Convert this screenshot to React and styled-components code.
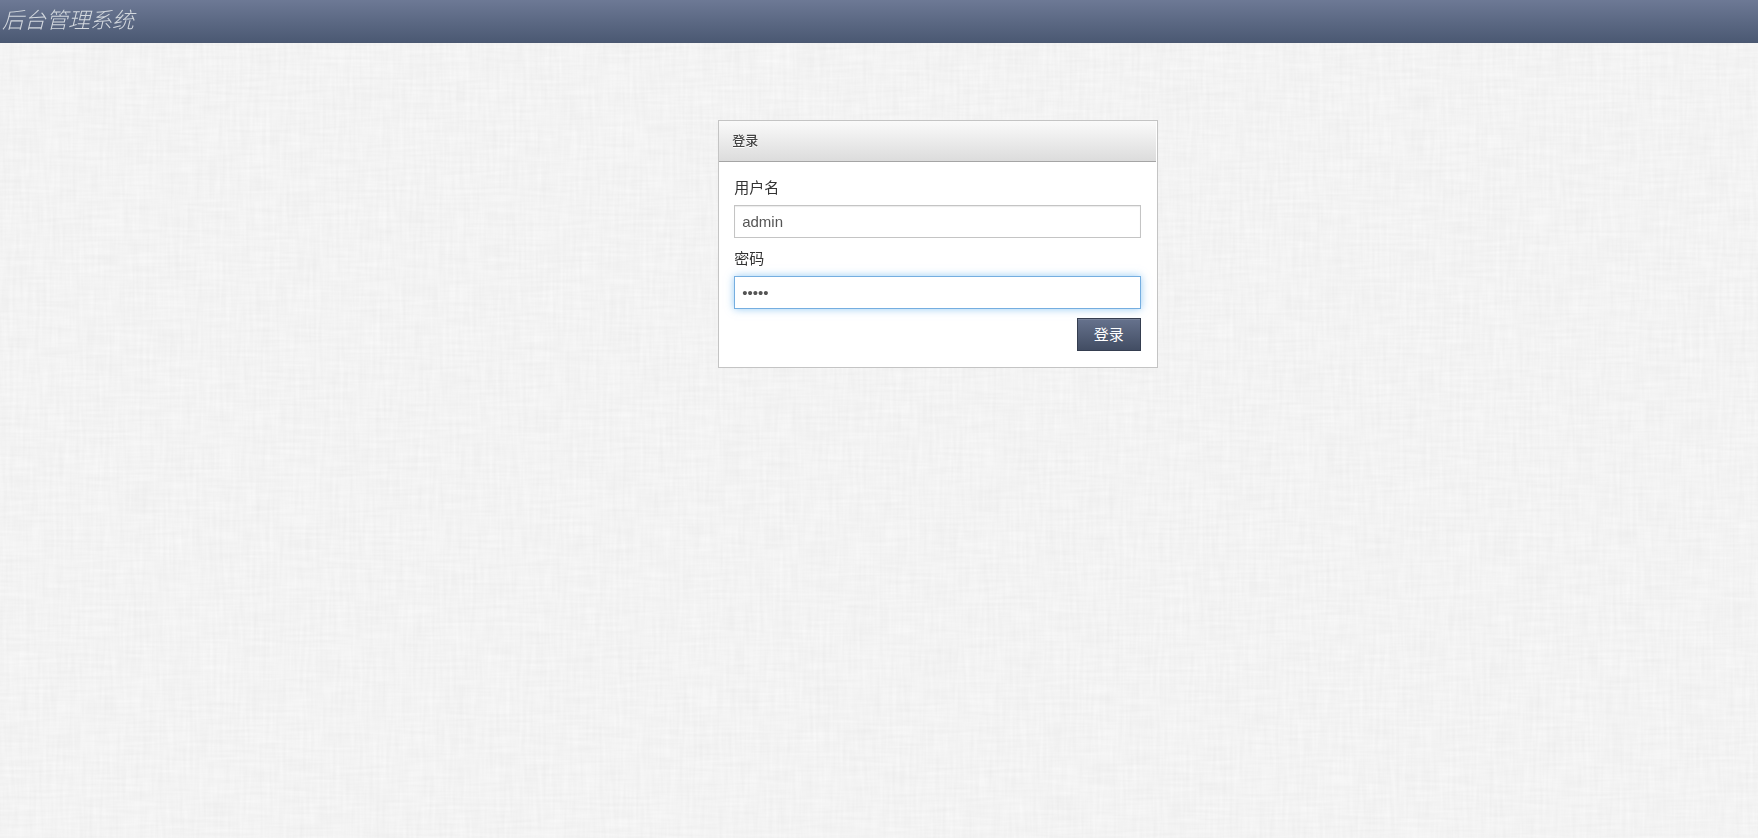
import React, { useState } from 'react';
import styled, { createGlobalStyle } from 'styled-components';

const GlobalStyle = createGlobalStyle`
    * {
        box-sizing: border-box;
    }
    body {
        margin: 0;
        background: #f3f3f3;
        color: #333333;
        font-family: "Liberation Sans", "Noto Sans CJK SC", sans-serif;
        font-size: 15px;
    }
`;

const Texture = styled.svg`
    position: fixed;
    inset: 0;
    z-index: -1;
    width: 100%;
    height: 100%;
`;

const Topbar = styled.header`
    display: flex;
    align-items: center;
    height: 43px;
    padding: 0 2px;
    background: linear-gradient(#6d7995, #4b5973);
    border-bottom: 1px solid #4b5871;
`;

const Brand = styled.h1`
    margin: 0;
    color: #d3d8de;
    font-size: 22px;
    font-style: italic;
    font-weight: 300;
    line-height: 32px;
`;

const Panel = styled.main`
    width: 25%;
    min-width: 280px;
    margin: 77px 0 0 40.85%;
    background: #ffffff;
    border: 1px solid #c4c4c4;
`;

const PanelHeading = styled.h2`
    height: 41px;
    margin: 0 1px 0 0;
    padding: 0 13px;
    background: linear-gradient(#fafafa, #dcdcdc);
    border-bottom: 1px solid #a5a5a5;
    color: #444444;
    font-size: 13px;
    font-weight: 500;
    line-height: 40px;
    text-shadow: 0 1px 0 #ffffff;
`;

const LoginForm = styled.form`
    display: flex;
    flex-direction: column;
    gap: 9px;
    padding: 14px 16px 16px 15px;
`;

const Field = styled.div`
    display: flex;
    flex-direction: column;
    gap: 6px;
`;

const Label = styled.label`
    line-height: 23px;
`;

const TextInput = styled.input`
    width: 100%;
    height: 33px;
    padding: 0 7px;
    background: #ffffff;
    border: 1px solid ${(props) => (props.$active ? '#75aee0' : '#c4c4c4')};
    border-radius: 0;
    box-shadow: ${(props) => (props.$active ? '0 0 8px rgba(82, 168, 236, 0.6)' : 'inset 0 1px 1px rgba(0, 0, 0, 0.08)')};
    color: #555555;
    font-family: inherit;
    font-size: 15px;
    outline: none;
`;

const SubmitButton = styled.button`
    align-self: flex-end;
    height: 33px;
    padding: 0 16px;
    background: linear-gradient(#66728d, #424d63);
    border: 1px solid #353e50;
    box-shadow: inset 0 1px 0 rgba(255, 255, 255, 0.12);
    color: #ffffff;
    font-family: inherit;
    font-size: 15px;
    line-height: 30px;
    cursor: pointer;
`;

// Linen weave: one noise stretched along each axis
const Linen = () => (
    <Texture aria-hidden="true">
        <filter id="weft" x="0" y="0" width="100%" height="100%" colorInterpolationFilters="sRGB">
            <feTurbulence type="fractalNoise" baseFrequency="0.025 0.3" numOctaves="2" seed="4" />
            <feColorMatrix values="0.07 0 0 0 0.917  0.07 0 0 0 0.917  0.07 0 0 0 0.917  0 0 0 0 1" />
        </filter>
        <filter id="warp" x="0" y="0" width="100%" height="100%" colorInterpolationFilters="sRGB">
            <feTurbulence type="fractalNoise" baseFrequency="0.3 0.025" numOctaves="2" seed="9" />
            <feColorMatrix values="0.07 0 0 0 0.917  0.07 0 0 0 0.917  0.07 0 0 0 0.917  0 0 0 0 0.5" />
        </filter>
        <rect width="100%" height="100%" filter="url(#weft)" />
        <rect width="100%" height="100%" filter="url(#warp)" />
    </Texture>
);

const App = () => {
    const [username, setUsername] = useState('admin');
    const [password, setPassword] = useState('admin');
    const [active, setActive] = useState('password');

    const handleSubmit = (event) => {
        event.preventDefault();
    };

    return (
        <>
            <GlobalStyle />
            <Linen />
            <Topbar>
                <Brand>后台管理系统</Brand>
            </Topbar>
            <Panel>
                <PanelHeading>登录</PanelHeading>
                <LoginForm onSubmit={handleSubmit}>
                    <Field>
                        <Label htmlFor="username">用户名</Label>
                        <TextInput
                            id="username"
                            type="text"
                            value={username}
                            $active={active === 'username'}
                            onFocus={() => setActive('username')}
                            onChange={(event) => setUsername(event.target.value)}
                        />
                    </Field>
                    <Field>
                        <Label htmlFor="password">密码</Label>
                        <TextInput
                            id="password"
                            type="password"
                            value={password}
                            $active={active === 'password'}
                            onFocus={() => setActive('password')}
                            onChange={(event) => setPassword(event.target.value)}
                        />
                    </Field>
                    <SubmitButton type="submit">登录</SubmitButton>
                </LoginForm>
            </Panel>
        </>
    );
};

export default App;
